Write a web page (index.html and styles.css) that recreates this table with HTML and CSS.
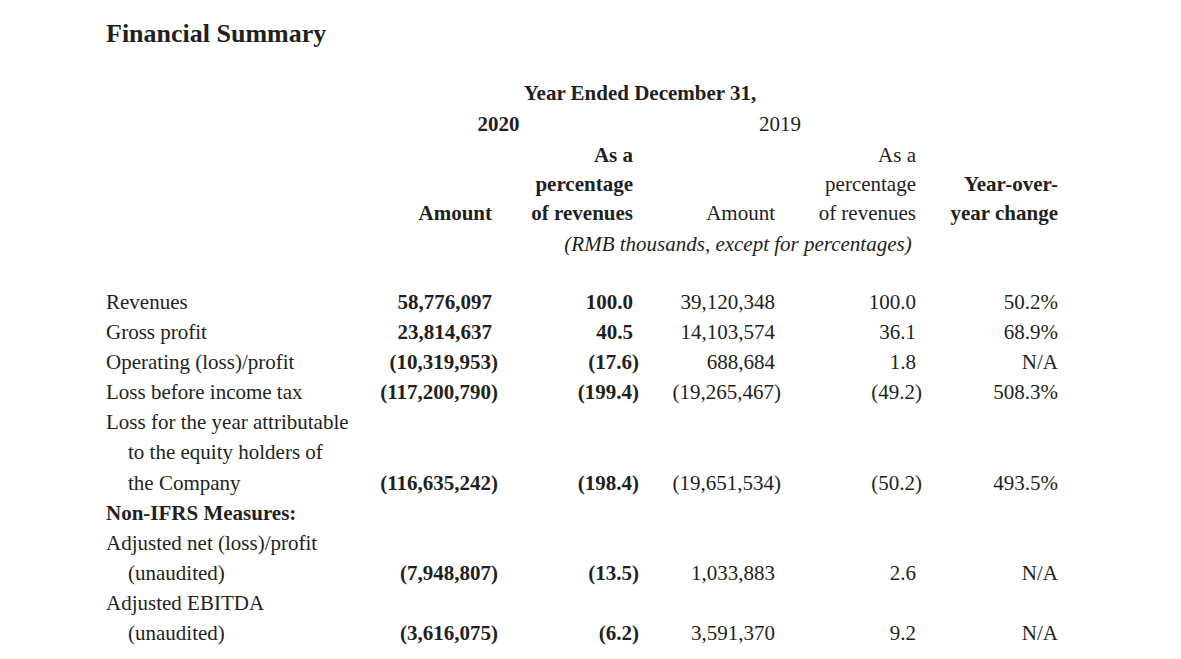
FILE: index.html
```html
<!DOCTYPE html>
<html>
<head>
<meta charset="utf-8">
<link rel="stylesheet" href="styles.css">
</head>
<body>
<div class="page">
  <h1 class="title">Financial Summary</h1>
  <div class="grid head">
    <div class="h-year">Year Ended December 31,</div>
    <div class="h-2020">2020</div>
    <div class="h-2019">2019</div>
    <div class="c1 b">Amount</div>
    <div class="c2 b">As a<br>percentage<br>of revenues</div>
    <div class="c3">Amount</div>
    <div class="c4">As a<br>percentage<br>of revenues</div>
    <div class="c5 b">Year-over-<br>year change</div>
    <div class="h-unit">(RMB thousands, except for percentages)</div>
  </div>
  <div class="grid data">
    <div class="lbl">Revenues</div>
    <div class="num b">58,776,097</div>
    <div class="num b">100.0</div>
    <div class="num">39,120,348</div>
    <div class="num">100.0</div>
    <div class="num">50.2%</div>

    <div class="lbl">Gross profit</div>
    <div class="num b">23,814,637</div>
    <div class="num b">40.5</div>
    <div class="num">14,103,574</div>
    <div class="num">36.1</div>
    <div class="num">68.9%</div>

    <div class="lbl">Operating (loss)/profit</div>
    <div class="num b"><span class="neg">(10,319,953)</span></div>
    <div class="num b"><span class="neg">(17.6)</span></div>
    <div class="num">688,684</div>
    <div class="num">1.8</div>
    <div class="num">N/A</div>

    <div class="lbl">Loss before income tax</div>
    <div class="num b"><span class="neg">(117,200,790)</span></div>
    <div class="num b"><span class="neg">(199.4)</span></div>
    <div class="num"><span class="neg">(19,265,467)</span></div>
    <div class="num"><span class="neg">(49.2)</span></div>
    <div class="num">508.3%</div>

    <div class="lbl">Loss for the year attributable<br>to the equity holders of<br>the Company</div>
    <div class="num b"><span class="neg">(116,635,242)</span></div>
    <div class="num b"><span class="neg">(198.4)</span></div>
    <div class="num"><span class="neg">(19,651,534)</span></div>
    <div class="num"><span class="neg">(50.2)</span></div>
    <div class="num">493.5%</div>

    <div class="lbl b full">Non-IFRS Measures:</div>

    <div class="lbl">Adjusted net (loss)/profit<br>(unaudited)</div>
    <div class="num b"><span class="neg">(7,948,807)</span></div>
    <div class="num b"><span class="neg">(13.5)</span></div>
    <div class="num">1,033,883</div>
    <div class="num">2.6</div>
    <div class="num">N/A</div>

    <div class="lbl">Adjusted EBITDA<br>(unaudited)</div>
    <div class="num b"><span class="neg">(3,616,075)</span></div>
    <div class="num b"><span class="neg">(6.2)</span></div>
    <div class="num">3,591,370</div>
    <div class="num">9.2</div>
    <div class="num">N/A</div>
  </div>
</div>
</body>
</html>
```
FILE: styles.css
```css
html, body {
  margin: 0;
  padding: 0;
  background: #ffffff;
}

.page {
  padding: 19px 0 0 106px;
  font-family: "Liberation Serif", "Times New Roman", serif;
  font-size: 21px;
  color: #231f20;
}

.title {
  margin: 0;
  font-size: 26px;
  line-height: 30px;
  font-weight: bold;
}

.grid {
  display: grid;
  grid-template-columns: 266px 120px 141px 142px 141px 142px;
}

.b {
  font-weight: bold;
}

.head {
  margin-top: 30px;
  line-height: 29px;
  align-items: end;
}

.h-year {
  grid-column: 2 / 6;
  grid-row: 1;
  text-align: center;
  font-weight: bold;
  padding-right: 8px;
}

.h-2020 {
  grid-column: 2 / 4;
  grid-row: 2;
  text-align: center;
  font-weight: bold;
  padding-right: 8px;
  line-height: 33px;
  align-self: start;
}

.h-2019 {
  grid-column: 4 / 6;
  grid-row: 2;
  text-align: center;
  padding-left: 11px;
  line-height: 33px;
  align-self: start;
}

.c1, .c2, .c3, .c4, .c5 {
  grid-row: 3;
  text-align: right;
}

.c1 { grid-column: 2; }
.c2 { grid-column: 3; }
.c3 { grid-column: 4; }
.c4 { grid-column: 5; }
.c5 { grid-column: 6; }

.h-unit {
  grid-column: 2 / 7;
  grid-row: 4;
  text-align: center;
  font-style: italic;
  padding-left: 46px;
  padding-top: 2px;
}

.data {
  margin-top: 28px;
  line-height: 30.1px;
  align-items: end;
}

.lbl {
  grid-column: 1;
  padding-left: 22px;
  text-indent: -22px;
}

.lbl.full {
  grid-column: 1 / 7;
}

.num {
  text-align: right;
  white-space: nowrap;
}

.neg {
  margin-right: -6px;
}
```
